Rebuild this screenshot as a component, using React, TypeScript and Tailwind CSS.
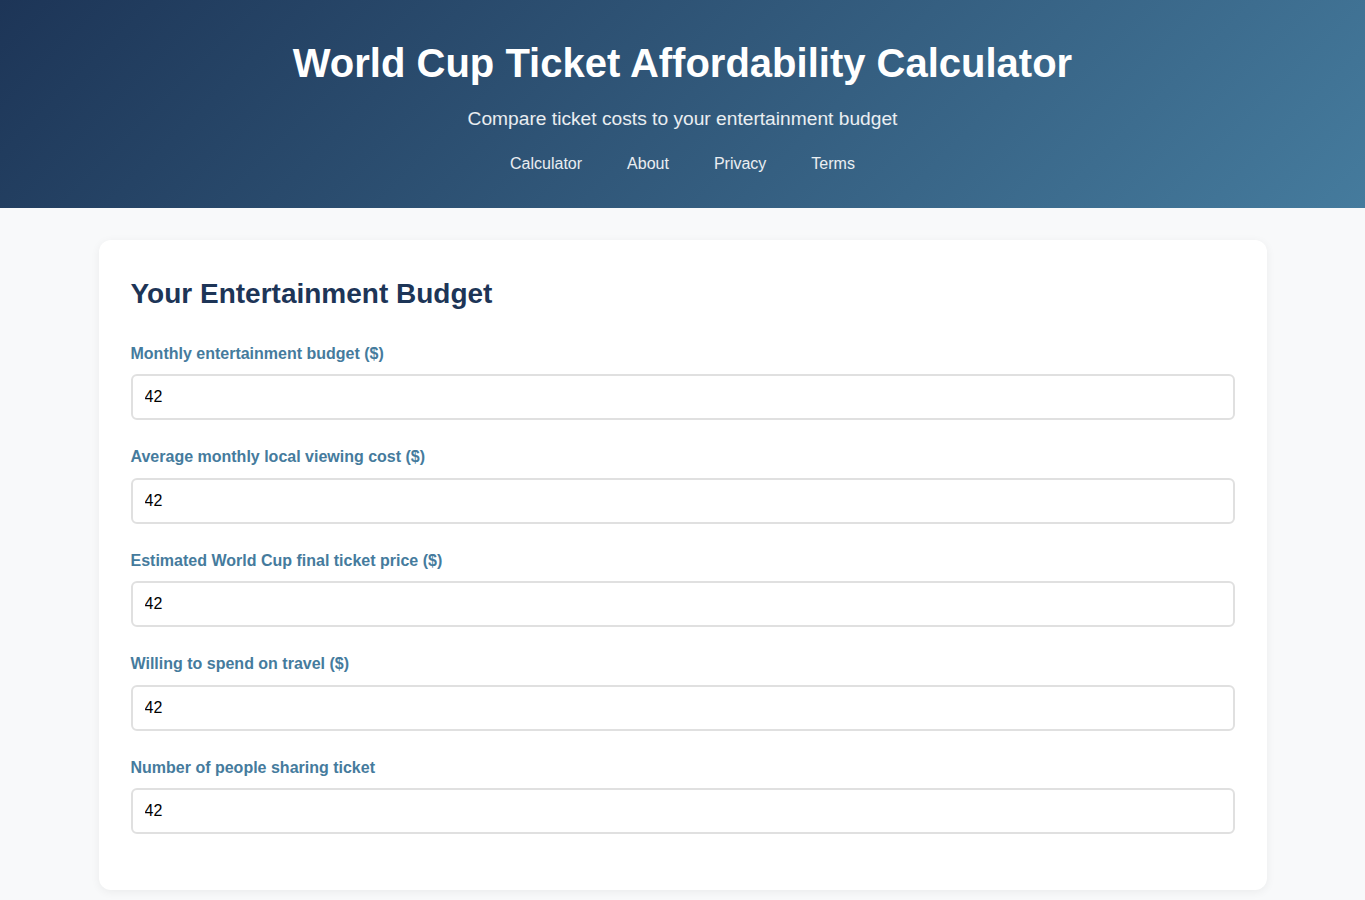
const fields = [
  "Monthly entertainment budget ($)",
  "Average monthly local viewing cost ($)",
  "Estimated World Cup final ticket price ($)",
  "Willing to spend on travel ($)",
  "Number of people sharing ticket",
]

const links = ["Calculator", "About", "Privacy", "Terms"]

export default function App() {
  return (
    <div className="min-h-screen bg-[#f8f9fa] font-['Liberation_Sans',Arial,sans-serif] leading-[1.6] text-[#333]">
      <header className="bg-[linear-gradient(135deg,#1d3557,#457b9d)] px-4 pt-[39px] pb-[32px] text-center text-white">
        <h1 className="text-[40px] font-bold leading-[1.2]">World Cup Ticket Affordability Calculator</h1>
        <p className="mt-[17px] text-[19.2px] text-white/90">Compare ticket costs to your entertainment budget</p>
        <nav className="mt-[17px] flex justify-center gap-[45px]">
          {links.map((link) => (
            <a key={link} href="#" className="text-base text-white/90">
              {link}
            </a>
          ))}
        </nav>
      </header>

      <main className="mx-auto max-w-[1200px] px-4 pt-8 pb-4">
        <section className="rounded-xl bg-white p-8 shadow-[0_2px_10px_rgba(0,0,0,0.06)]">
          <h2 className="mb-6 text-[28px] font-bold leading-[1.6] text-[#1d3557]">Your Entertainment Budget</h2>
          {fields.map((label) => (
            <div key={label} className="mb-6">
              <label className="mb-2 block text-base leading-[1.6] font-bold text-[#457b9d]">{label}</label>
              <input
                type="number"
                defaultValue={42}
                className="block h-[46px] w-full rounded-md border-2 border-[#e0e0e0] bg-white px-3 text-base leading-[normal] text-black outline-none"
              />
            </div>
          ))}
        </section>
      </main>
    </div>
  )
}
